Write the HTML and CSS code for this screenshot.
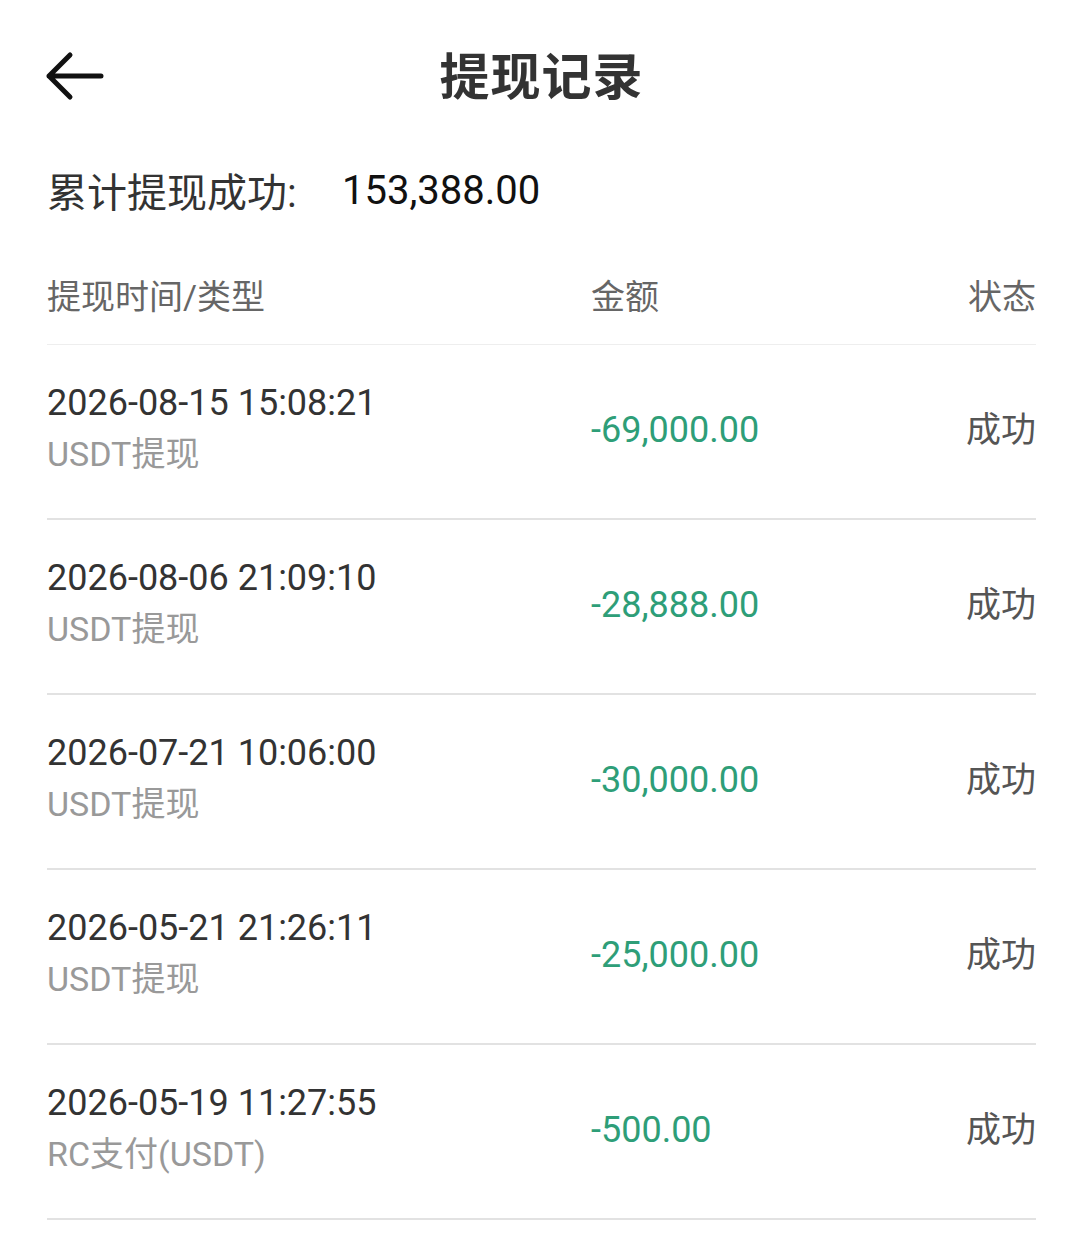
FILE: index.html
```html
<!DOCTYPE html>
<html lang="zh-CN">
<head>
    <meta charset="UTF-8">
    <meta name="viewport" content="width=device-width, initial-scale=1.0">
    <title>提现记录</title>
    <link rel="stylesheet" href="styles.css">
</head>
<body>
    <header class="top-bar">
        <a href="#" class="back" aria-label="返回">
            <svg width="60" height="50" viewBox="0 0 60 50">
                <path d="M56 25 H4 M25 4 L4 25 L25 46" fill="none" stroke="#111" stroke-width="5" stroke-linecap="round" stroke-linejoin="round"/>
            </svg>
        </a>
        <h1>提现记录</h1>
    </header>

    <div class="total">
        <span class="total-label">累计提现成功:</span>
        <span class="total-value">153,388.00</span>
    </div>

    <div class="table-head">
        <span class="col-time">提现时间/类型</span>
        <span class="col-amount">金额</span>
        <span class="col-status">状态</span>
    </div>

    <div class="records">
        <div class="record">
            <div class="col-time">
                <div class="date">2026-08-15 15:08:21</div>
                <div class="type">USDT提现</div>
            </div>
            <div class="col-amount amount">-69,000.00</div>
            <div class="col-status status">成功</div>
        </div>
        <div class="record">
            <div class="col-time">
                <div class="date">2026-08-06 21:09:10</div>
                <div class="type">USDT提现</div>
            </div>
            <div class="col-amount amount">-28,888.00</div>
            <div class="col-status status">成功</div>
        </div>
        <div class="record">
            <div class="col-time">
                <div class="date">2026-07-21 10:06:00</div>
                <div class="type">USDT提现</div>
            </div>
            <div class="col-amount amount">-30,000.00</div>
            <div class="col-status status">成功</div>
        </div>
        <div class="record">
            <div class="col-time">
                <div class="date">2026-05-21 21:26:11</div>
                <div class="type">USDT提现</div>
            </div>
            <div class="col-amount amount">-25,000.00</div>
            <div class="col-status status">成功</div>
        </div>
        <div class="record">
            <div class="col-time">
                <div class="date">2026-05-19 11:27:55</div>
                <div class="type">RC支付(USDT)</div>
            </div>
            <div class="col-amount amount">-500.00</div>
            <div class="col-status status">成功</div>
        </div>
    </div>
</body>
</html>
```

FILE: styles.css
```css
body {
    margin: 0;
    padding: 0 44px 0 47px;
    background-color: #fff;
    color: #333;
    font-family: Roboto, "Noto Sans CJK SC", sans-serif;
}

/* top bar with back arrow and centered title */
.top-bar {
    position: relative;
    height: 152px;
    display: flex;
    align-items: center;
    justify-content: center;
}

.back {
    position: absolute;
    left: -2px;
    top: 51px;
    display: flex;
}

.top-bar h1 {
    margin: 0;
    margin-top: -7px;
    font-size: 50px;
    font-weight: bold;
    color: #333;
    letter-spacing: 1px;
}

.total {
    display: flex;
    align-items: center;
    height: 76px;
}

.total-label {
    font-size: 40px;
    color: #333;
    width: 295px;
}

.total-value {
    font-size: 40px;
    color: #111;
}

.table-head {
    display: flex;
    align-items: center;
    height: 116px;
    padding-top: 0;
    border-bottom: 1px solid #eee;
    font-size: 34px;
    color: #666;
}

.table-head span {
    margin-top: 16px;
}

.col-time {
    width: 544px;
}

.col-amount {
    flex: 1;
}

.col-status {
    text-align: right;
}

.record {
    display: flex;
    align-items: center;
    height: 173px;
    border-bottom: 2px solid #e2e2e2;
}

.date {
    font-size: 36px;
    color: #333;
    line-height: 50px;
    margin-top: -6px;
}

.type {
    font-size: 34px;
    color: #999;
    line-height: 52px;
}

.amount {
    font-size: 36px;
    color: #2e9e78;
    margin-top: -4px;
}

.status {
    font-size: 35px;
    color: #555;
    margin-top: -10px;
}
```
